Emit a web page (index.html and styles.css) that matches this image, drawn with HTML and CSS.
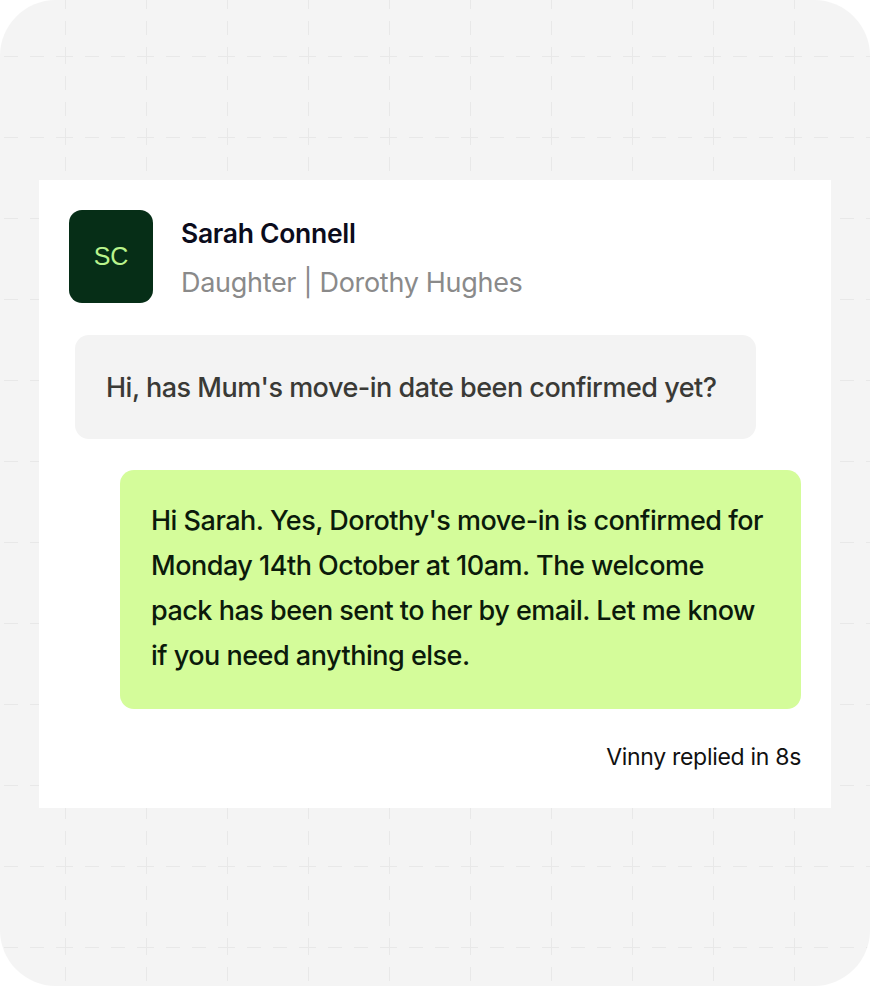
FILE: index.html
```html
<!DOCTYPE html>
<html lang="en">
<head>
<meta charset="utf-8">
<title>Conversation</title>
<link rel="stylesheet" href="styles.css">
</head>
<body>
<div class="frame">
  <div class="card">
    <div class="contact">
      <div class="avatar">SC</div>
      <div class="contact-info">
        <div class="contact-name">Sarah Connell</div>
        <div class="contact-role">Daughter | Dorothy Hughes</div>
      </div>
    </div>
    <div class="bubble bubble-in">Hi, has Mum's move-in date been confirmed yet?</div>
    <div class="bubble bubble-out">Hi Sarah. Yes, Dorothy's move-in is confirmed for Monday 14th October at 10am. The welcome pack has been sent to her by email. Let me know if you need anything else.</div>
    <div class="reply-meta">Vinny replied in 8s</div>
  </div>
</div>
</body>
</html>
```

FILE: styles.css
```css
* { box-sizing: border-box; }
html, body { margin: 0; padding: 0; background: #ffffff; }
body { font-family: Inter, "Noto Sans", sans-serif; }

.frame {
  width: 870px;
  height: 986px;
  border-radius: 56px;
  background-color: #f4f4f4;
  background-image: url("data:image/svg+xml,%3Csvg xmlns='http://www.w3.org/2000/svg' width='81' height='81'%3E%3Cg stroke='%23e8e8e8' stroke-width='1'%3E%3Cline x1='0' y1='0.5' x2='81' y2='0.5' stroke-dasharray='8 12 14 12 14 12 9'/%3E%3Cline x1='0.5' y1='0' x2='0.5' y2='81' stroke-dasharray='8 12 14 12 14 12 9'/%3E%3C/g%3E%3C/svg%3E");
  background-position: 65px 56px;
  padding: 180px 39px 0 39px;
}

.card {
  width: 792px;
  height: 628px;
  background: #ffffff;
  padding: 30px 30px 0 30px;
  display: flex;
  flex-direction: column;
}

.contact {
  display: flex;
  align-items: center;
  gap: 28px;
}

.avatar {
  width: 84px;
  height: 93px;
  border-radius: 13px;
  background: #062e17;
  color: #b9f38c;
  display: flex;
  align-items: center;
  justify-content: center;
  font-family: "Liberation Sans", Arial, sans-serif;
  font-size: 25px;
  flex-shrink: 0;
}

.contact-info {
  display: flex;
  flex-direction: column;
  gap: 18px;
  padding-top: 2px;
}

.contact-name {
  font-size: 26.5px;
  font-weight: 600;
  color: #0b0c1c;
  line-height: 32px;
  letter-spacing: -0.3px;
}

.contact-role {
  font-size: 27px;
  font-weight: 400;
  color: #8a8a8a;
  line-height: 32px;
  letter-spacing: -0.3px;
}

.bubble {
  width: 681px;
  border-radius: 14px;
  font-size: 27px;
  font-weight: 500;
  letter-spacing: -0.5px;
}

.bubble-in {
  margin-top: 32px;
  margin-left: 6px;
  height: 104px;
  background: #f3f3f3;
  color: #3a3a36;
  padding: 0 31px;
  display: flex;
  align-items: center;
}

.bubble-out {
  margin-top: 31px;
  align-self: flex-end;
  height: 239px;
  background: #d4fc9a;
  color: #0b1a0b;
  padding: 28px 30px 0 31px;
  line-height: 45px;
}

.reply-meta {
  align-self: flex-end;
  margin-top: 34px;
  font-size: 23px;
  color: #111111;
  line-height: 28px;
  letter-spacing: -0.3px;
}
```
